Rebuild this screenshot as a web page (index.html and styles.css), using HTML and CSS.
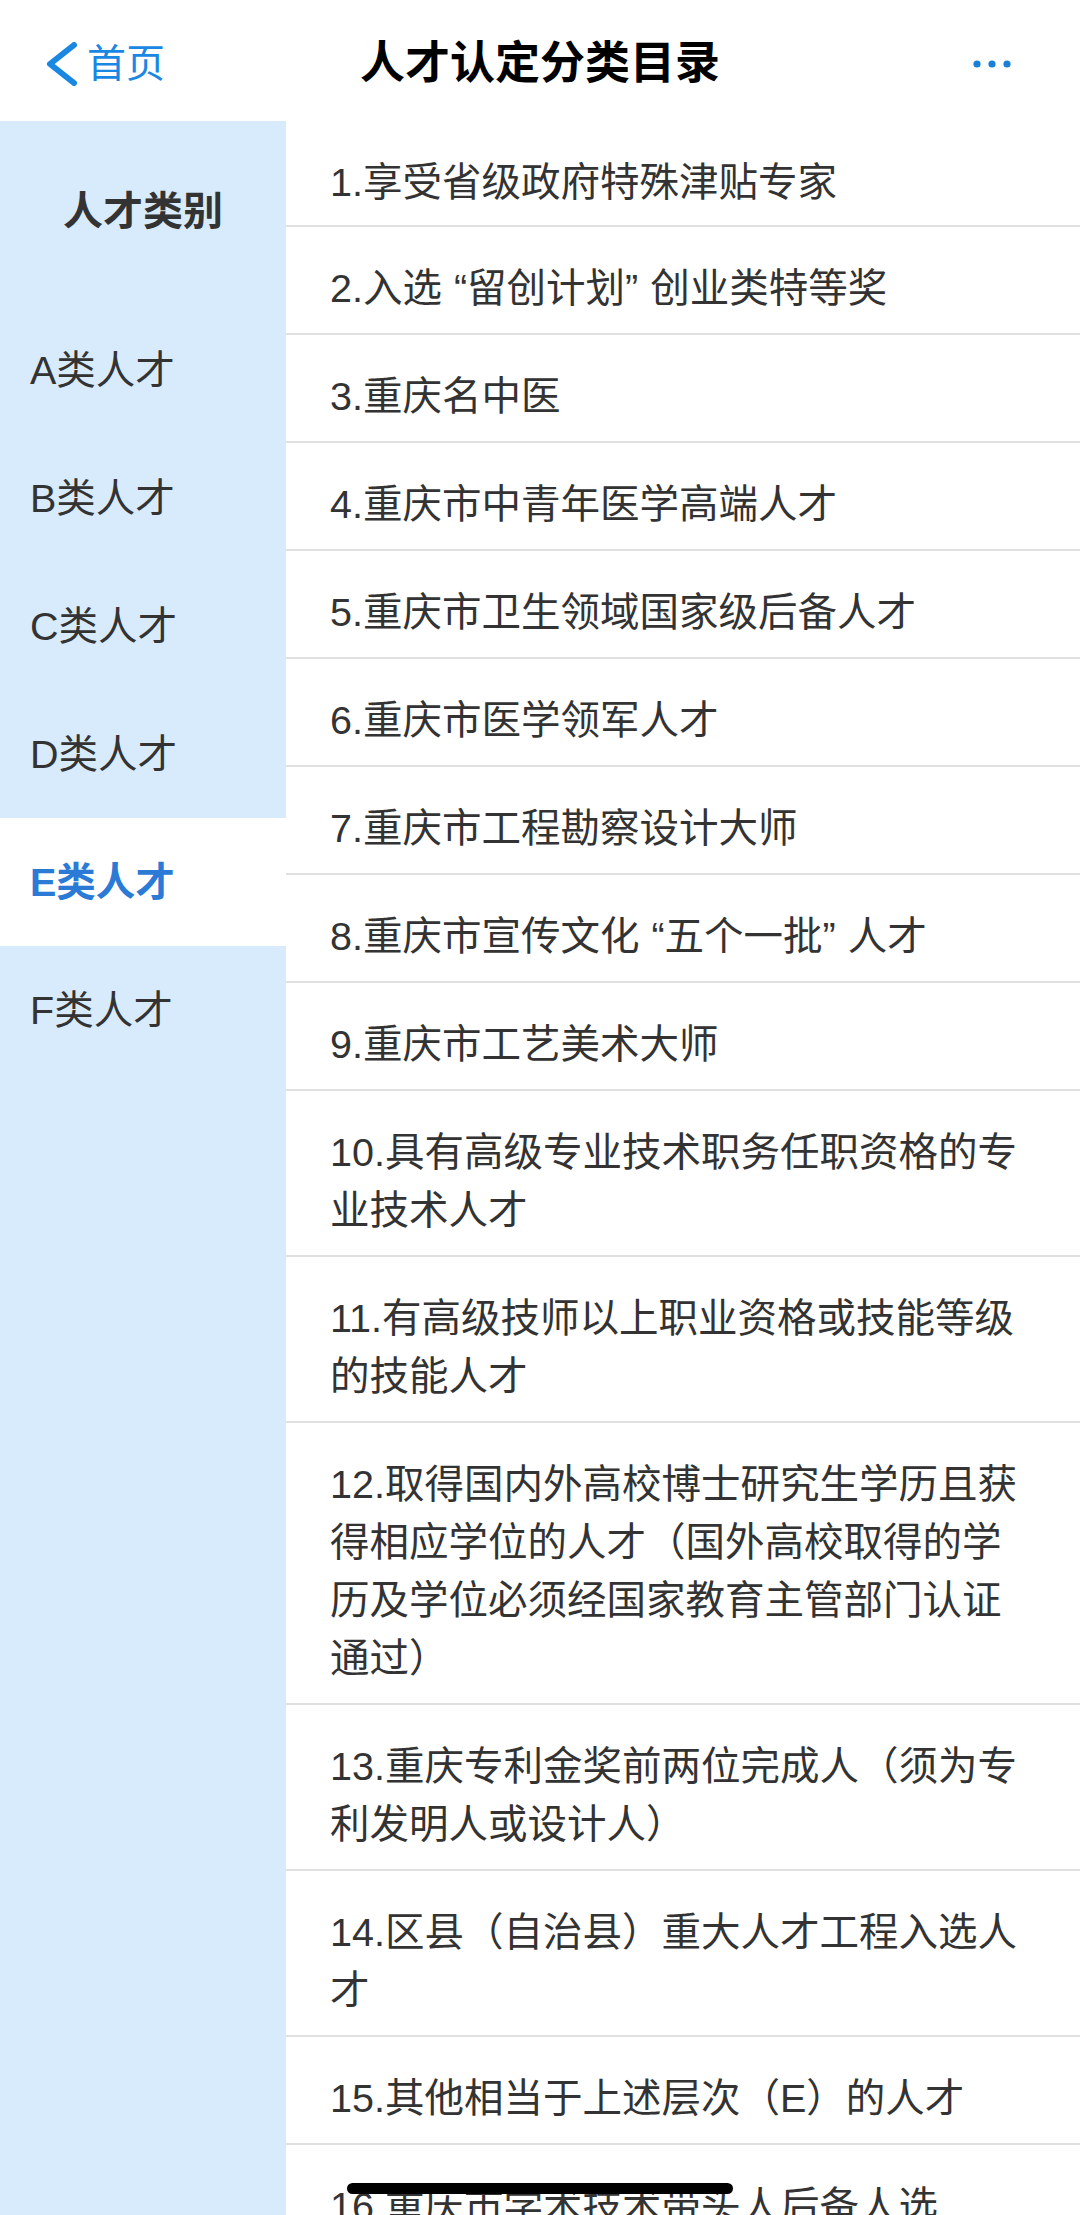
FILE: index.html
```html
<!DOCTYPE html>
<html lang="zh-CN">
<head>
<meta charset="utf-8">
<title>人才认定分类目录</title>
<link rel="stylesheet" href="styles.css">
</head>
<body>
<header class="topbar">
  <div class="back">
    <svg class="chev" width="32" height="44" viewBox="0 0 32 44"><polyline points="28,3 4,22 28,41" fill="none" stroke="#1a88e2" stroke-width="6" stroke-linecap="round" stroke-linejoin="round"/></svg>
    <span class="back-text">首页</span>
  </div>
  <div class="title">人才认定分类目录</div>
  <div class="more">
    <svg width="44" height="12" viewBox="0 0 44 12"><circle cx="7" cy="6" r="3.6" fill="#1a7fd6"/><circle cx="22" cy="6" r="3.6" fill="#1a7fd6"/><circle cx="37" cy="6" r="3.6" fill="#1a7fd6"/></svg>
  </div>
</header>
<main class="body">
  <nav class="side">
    <div class="side-title">人才类别</div>
    <div class="side-item">A类人才</div>
    <div class="side-item">B类人才</div>
    <div class="side-item">C类人才</div>
    <div class="side-item">D类人才</div>
    <div class="side-item active">E类人才</div>
    <div class="side-item">F类人才</div>
  </nav>
  <ul class="list">
    <li class="row">1.享受省级政府特殊津贴专家</li>
    <li class="row">2.入选<span class="ql">“</span>留创计划<span class="qr">”</span>创业类特等奖</li>
    <li class="row">3.重庆名中医</li>
    <li class="row">4.重庆市中青年医学高端人才</li>
    <li class="row">5.重庆市卫生领域国家级后备人才</li>
    <li class="row">6.重庆市医学领军人才</li>
    <li class="row">7.重庆市工程勘察设计大师</li>
    <li class="row">8.重庆市宣传文化<span class="ql">“</span>五个一批<span class="qr">”</span>人才</li>
    <li class="row">9.重庆市工艺美术大师</li>
    <li class="row">10.具有高级专业技术职务任职资格的专业技术人才</li>
    <li class="row">11.有高级技师以上职业资格或技能等级的技能人才</li>
    <li class="row">12.取得国内外高校博士研究生学历且获得相应学位的人才（国外高校取得的学历及学位必须经国家教育主管部门认证通过）</li>
    <li class="row">13.重庆专利金奖前两位完成人（须为专利发明人或设计人）</li>
    <li class="row">14.区县（自治县）重大人才工程入选人才</li>
    <li class="row">15.其他相当于上述层次（E）的人才</li>
    <li class="row">16.重庆市学术技术带头人后备人选</li>
  </ul>
</main>
<div class="home-bar"></div>
</body>
</html>
```

FILE: styles.css
```css
* { box-sizing: border-box; }
html, body {
  margin: 0;
  padding: 0;
}
body {
  width: 1080px;
  height: 2215px;
  overflow: hidden;
  background: #ffffff;
  font-family: "Liberation Sans", "Noto Sans CJK SC", sans-serif;
  color: #333333;
  position: relative;
}
.topbar {
  height: 121px;
  padding-top: 6px;
  display: grid;
  grid-template-columns: 1fr auto 1fr;
  align-items: center;
  background: #ffffff;
}
.back {
  display: flex;
  align-items: center;
  padding-left: 46px;
  color: #1a88e2;
}
.chev { display: block; }
.back-text {
  font-size: 39px;
  line-height: 44px;
  margin-left: 9px;
}
.title {
  font-size: 45px;
  font-weight: 700;
  color: #000000;
  line-height: 56px;
}
.more {
  display: flex;
  justify-content: flex-end;
  padding-right: 66px;
}
.more svg { display: block; }

.body {
  display: flex;
  align-items: stretch;
}
.side {
  width: 286px;
  flex: none;
  background: #d8ebfd;
}
.side-title {
  height: 185px;
  padding-top: 60px;
  line-height: 60px;
  font-size: 40px;
  font-weight: 700;
  text-align: center;
  color: #333333;
}
.side-item {
  height: 128px;
  line-height: 128px;
  padding-left: 30px;
  font-size: 39.5px;
  color: #333333;
}
.side-item.active {
  background: #ffffff;
  color: #2a7ad6;
  font-weight: 700;
}
.list {
  flex: 1;
  list-style: none;
  margin: 0;
  padding: 0;
}
.row {
  padding: 32px 45px 16px 44px;
  font-size: 39.5px;
  line-height: 58px;
  border-bottom: 2px solid #e0e0e0;
  color: #333333;
}
.row:first-child {
  padding-bottom: 14px;
}
.ql {
  margin-left: 12px;
}
.qr {
  margin-right: 12px;
}
.home-bar {
  position: absolute;
  left: 347px;
  top: 2183px;
  width: 386px;
  height: 11px;
  border-radius: 6px;
  background: #000000;
}
```
